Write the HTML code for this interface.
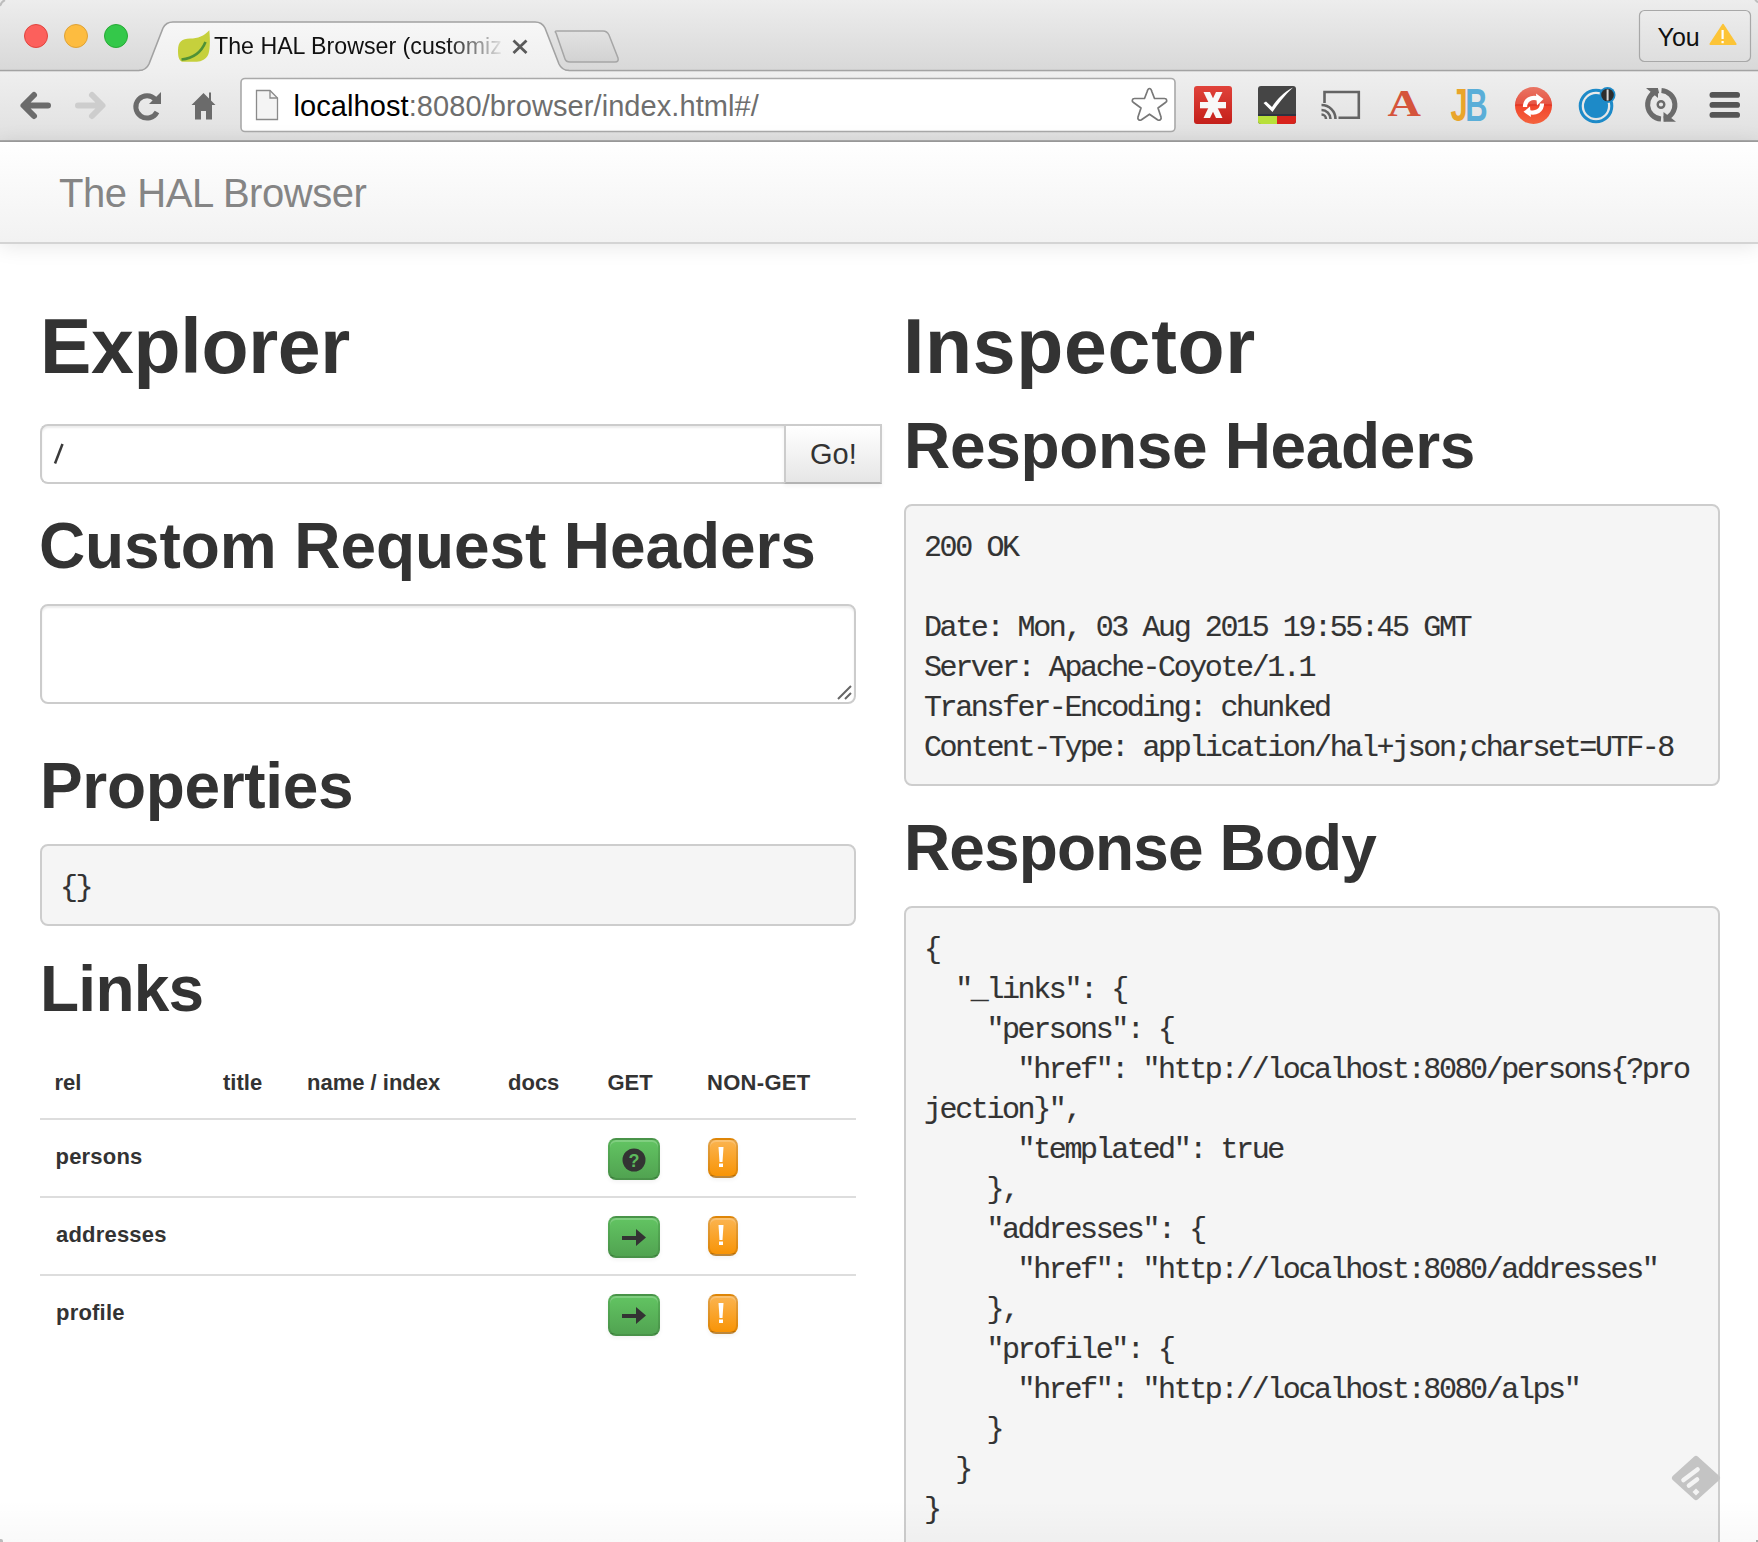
<!DOCTYPE html>
<html><head><meta charset="utf-8">
<style>
*{box-sizing:border-box;margin:0;padding:0}
html,body{width:1758px;height:1542px;overflow:hidden;background:#fff;font-family:"Liberation Sans",sans-serif;color:#333}
.abs{position:absolute}
#tabstrip{position:absolute;left:0;top:0;width:1758px;height:71px;background:linear-gradient(#ececec,#d9d9d9);border-bottom:2px solid #a3a3a3}
#toolbar{position:absolute;left:0;top:71px;width:1758px;height:71px;background:linear-gradient(#f1f1f1,#e4e4e4);border-bottom:2px solid #9d9d9d}
.light{position:absolute;width:24px;height:24px;border-radius:50%;top:24px}
#navbar{position:absolute;left:0;top:142px;width:1758px;height:102px;background:linear-gradient(#fff,#f2f2f2);border-bottom:2px solid #d4d4d4;box-shadow:0 2px 20px rgba(0,0,0,.1)}
.brand{position:absolute;left:59px;top:167.5px;font-size:40px;color:#858585;letter-spacing:-0.45px;white-space:nowrap;line-height:50px}
h1,h2{position:absolute;font-weight:bold;color:#333;white-space:nowrap}
h1{font-size:77px;line-height:80px}
h2{font-size:64px;line-height:80px}
pre{position:absolute;background:#f5f5f5;border:2px solid #cdcdcd;border-radius:8px;font-family:"Liberation Mono",monospace;font-size:30px;letter-spacing:-2.4px;line-height:40px;color:#333;padding:21px 18px;white-space:pre;-webkit-text-stroke:0.15px #333;padding-top:22px}
.th{font-size:22px;font-weight:bold;line-height:40px;color:#333;white-space:nowrap}
.hr{left:40px;width:816px;height:2px;background:#ddd}
.gbtn{left:608px;width:52px;height:42px;border-radius:8px;background:linear-gradient(#62c462,#51a351);border:2px solid #479447;border-color:rgba(0,0,0,.1) rgba(0,0,0,.1) rgba(0,0,0,.25);box-shadow:inset 0 2px 0 rgba(255,255,255,.2),0 2px 4px rgba(0,0,0,.05)}
.obtn{left:708px;width:30px;height:40px;border-radius:8px;background:linear-gradient(#fbb450,#f89406);border:2px solid rgba(0,0,0,.1);border-bottom-color:rgba(0,0,0,.25);box-shadow:inset 0 2px 0 rgba(255,255,255,.2),0 2px 4px rgba(0,0,0,.05)}
.ex{position:absolute;left:-2px;top:-2px}
</style></head><body>

<svg class="abs" style="left:0;top:0" width="1758" height="142" viewBox="0 0 1758 142">
 <defs>
  <linearGradient id="gts" x1="0" y1="0" x2="0" y2="1"><stop offset="0" stop-color="#ededed"/><stop offset="1" stop-color="#d8d8d8"/></linearGradient>
  <linearGradient id="gtab" x1="0" y1="0" x2="0" y2="1"><stop offset="0" stop-color="#f7f7f7"/><stop offset="1" stop-color="#efefef"/></linearGradient>
  <linearGradient id="gtb" x1="0" y1="0" x2="0" y2="1"><stop offset="0" stop-color="#efefef"/><stop offset="1" stop-color="#e0e0e0"/></linearGradient>
  <linearGradient id="gyou" x1="0" y1="0" x2="0" y2="1"><stop offset="0" stop-color="#ececec"/><stop offset="1" stop-color="#dedede"/></linearGradient>
  <linearGradient id="gnt" x1="0" y1="0" x2="0" y2="1"><stop offset="0" stop-color="#e2e2e2"/><stop offset="1" stop-color="#d2d2d2"/></linearGradient>
  <linearGradient id="mfade" x1="0" y1="0" x2="1" y2="0"><stop offset="0" stop-color="#fff"/><stop offset="1" stop-color="#000"/></linearGradient>
  <linearGradient id="glp" x1="0" y1="0" x2="0" y2="1"><stop offset="0" stop-color="#e0423a"/><stop offset="1" stop-color="#c41f1a"/></linearGradient>
  <linearGradient id="gred" x1="0" y1="0" x2="0" y2="1"><stop offset="0" stop-color="#e6624f"/><stop offset="0.5" stop-color="#e33a27"/><stop offset="0.52" stop-color="#f2462c"/><stop offset="1" stop-color="#f4633e"/></linearGradient>
 </defs>
 <rect x="0" y="0" width="1758" height="71" fill="url(#gts)"/>
 <rect x="0" y="71" width="1758" height="70" fill="url(#gtb)"/>
 <rect x="0" y="69.8" width="1758" height="1.5" fill="#a3a3a3"/>
 <rect x="0" y="140.3" width="1758" height="1.6" fill="#959595"/>
 <!-- new tab -->
 <path d="M556 33 Q554 31 557 31 L603 31 Q607 31 609 35 L618 58 Q619 62 615 62 L570 62 Q566 62 565 59 Z" fill="url(#gnt)" stroke="#a6a6a6" stroke-width="1.5"/>
 <!-- active tab -->
 <path d="M139 72 L139 71 Q146 71 149 64 L163 28 Q166 22 173 22 L535 22 Q542 22 545 28 L559 64 Q562 71 569 71 L569 72 Z" fill="url(#gtab)"/>
 <path d="M139 70.5 Q146 70.5 149 64 L163 28 Q166 22 173 22 L535 22 Q542 22 545 28 L559 64 Q562 70.5 569 70.5" fill="none" stroke="#a2a2a2" stroke-width="1.6"/>
 <rect x="147" y="70" width="414" height="3" fill="#efefef"/>
 <!-- favicon leaf -->
 <path d="M182 61.8 C178.5 60 178 56 178 50 C178 42 182 38.5 190 38.5 C198 38.5 204 36 209.3 30.2 C210.3 40 210.3 52 207.5 56 C204.5 60.5 200 61.8 195 61.8 Z" fill="#c6d03c"/>
 <path d="M181.5 59.5 C192 58.5 201 53 205.5 42" fill="none" stroke="#4f9136" stroke-width="2.6"/>
 <mask id="tmask" maskUnits="userSpaceOnUse" x="0" y="0" width="1758" height="71"><rect x="0" y="0" width="446" height="71" fill="#fff"/><rect x="446" y="0" width="60" height="71" fill="url(#mfade)"/></mask>
 <text x="214" y="54" font-family="Liberation Sans" font-size="23.2" fill="#111" mask="url(#tmask)">The HAL Browser (customiz</text>
 <path d="M513.5 40.5 L526.5 53 M526.5 40.5 L513.5 53" stroke="#5a5a5a" stroke-width="2.8"/>
 <!-- You button -->
 <rect x="1639.5" y="10.5" width="111" height="51" rx="5" fill="url(#gyou)" stroke="#a8a8a8" stroke-width="1.2"/>
 <text x="1657.5" y="46" font-family="Liberation Sans" font-size="25" fill="#111">You</text>
 <path d="M1723 25 L1735.5 44 L1710.5 44 Z" fill="#fcc437" stroke="#fcc437" stroke-width="2.2" stroke-linejoin="round"/>
 <rect x="1721.5" y="30" width="2.2" height="9" fill="#fff"/><rect x="1721.5" y="41" width="2.2" height="2.2" fill="#fff"/>
 <!-- back -->
 <path d="M48 105.5 L25 105.5 M34 95 L23.5 105.5 L34 116" fill="none" stroke="#6b6b6b" stroke-width="6" stroke-linecap="round" stroke-linejoin="round"/>
 <!-- forward -->
 <path d="M78 105.5 L101 105.5 M92 95 L102.5 105.5 L92 116" fill="none" stroke="#cdcdcd" stroke-width="6" stroke-linecap="round" stroke-linejoin="round"/>
 <!-- reload -->
 <path d="M155.5 99.5 A11.2 11.2 0 1 0 157 112" fill="none" stroke="#6b6b6b" stroke-width="5"/>
 <path d="M161 92 L161 104 L149 104 Z" fill="#6b6b6b"/>
 <!-- home -->
 <path d="M203.5 93 L191.5 105 L195 105 L195 119.5 L201 119.5 L201 111 L206 111 L206 119.5 L212 119.5 L212 105 L215.5 105 L211 100.5 L211 92.5 L209 92.5 L209 98.5 Z" fill="#6b6b6b"/>
 <!-- address bar -->
 <rect x="241" y="78.5" width="934" height="53" rx="4" fill="#fff" stroke="#a9a9a9" stroke-width="1.6"/>
 <path d="M256.5 90.5 L270 90.5 L277.5 98 L277.5 119.5 L256.5 119.5 Z" fill="#f4f4f4" stroke="#8a8a8a" stroke-width="1.3"/>
 <path d="M270 90.5 L270 98 L277.5 98" fill="none" stroke="#8a8a8a" stroke-width="1.3"/>
 <text x="293.5" y="116" font-family="Liberation Sans" font-size="29" letter-spacing="0.08" fill="#000">localhost<tspan fill="#6e6e6e">:8080/browser/index.html#/</tspan></text>
 <path d="M1149.5 88.5 C1151 88.5 1151.5 90 1152 92 L1154.5 98.5 L1164.5 98.5 C1167 98.5 1167.5 101.5 1165.5 102.5 L1158 108 L1161 117 C1161.8 119.5 1159.5 121 1157.5 119.8 L1149.5 114.2 L1141.5 119.8 C1139.5 121 1137.2 119.5 1138 117 L1141 108 L1133.5 102.5 C1131.5 101.5 1132 98.5 1134.5 98.5 L1144.5 98.5 L1147 92 C1147.5 90 1148 88.5 1149.5 88.5 Z" fill="none" stroke="#787878" stroke-width="1.7" stroke-linejoin="round"/>
 <!-- lastpass -->
 <rect x="1194" y="86" width="38" height="38" rx="3" fill="url(#glp)"/>
 <clipPath id="lpc"><rect x="1190" y="92" width="40" height="26"/></clipPath>
 <g fill="#f8f8f8" clip-path="url(#lpc)">
  <rect x="1200" y="102" width="26" height="6.3"/>
  <path d="M1203.5 92 L1210 92 L1222.5 118 L1216 118 Z"/>
  <path d="M1222.5 92 L1216 92 L1203.5 118 L1210 118 Z"/>
 </g>
 <!-- check -->
 <rect x="1258" y="86" width="38" height="38" rx="3" fill="#454545"/>
 <rect x="1258" y="114" width="38" height="2" fill="#2e3340"/>
 <path d="M1258 116 L1277 116 L1277 124 L1261 124 Q1258 124 1258 121 Z" fill="#b8e03a"/><path d="M1277 116 L1296 116 L1296 121 Q1296 124 1293 124 L1277 124 Z" fill="#d8231c"/>
 <path d="M1263.5 103 L1266 101.5 L1272 107 C1277 99 1284 92 1293 87.5 C1285 95 1278 104 1272.5 112 Z" fill="#fff"/>
 <!-- cast -->
 <path d="M1324.5 103 L1324.5 92 L1358.8 92 L1358.8 117.8 L1338.5 117.8" fill="none" stroke="#646464" stroke-width="2.6"/>
 <path d="M1321.5 105 A14 14 0 0 1 1335.5 119 M1321.5 110 A9 9 0 0 1 1330.5 119 M1321.5 114.5 A4.5 4.5 0 0 1 1326 119" fill="none" stroke="#646464" stroke-width="2.6"/>
 <!-- A -->
 <text transform="translate(1387.5,116) scale(1.22,1)" x="0" y="0" font-family="Liberation Serif" font-weight="bold" font-size="38" fill="#d5543b">A</text>
 <!-- JB -->
 <text transform="translate(1450.5,120.5) scale(1.0,1.5)" x="0" y="0" font-family="Liberation Sans" font-weight="bold" font-size="31" fill="#e9a52a" letter-spacing="-2.5">J<tspan fill="#5aaed8">B</tspan></text>
 <!-- red sync -->
 <circle cx="1533.5" cy="105.5" r="18.5" fill="url(#gred)"/>
 <path d="M1516 104 A17.5 17.5 0 0 1 1551 104 Z" fill="#fff" opacity="0.12"/>
 <path d="M1525 107 C1525 100 1531 96.5 1538 98.5" fill="none" stroke="#fff" stroke-width="4.2"/>
 <path d="M1536 93.5 L1543.5 99 L1537 105.5 Z" fill="#fff"/>
 <path d="M1542 103.5 C1542 110.5 1536 114 1529 112" fill="none" stroke="#fff" stroke-width="4.2"/>
 <path d="M1531 117 L1523.5 111.8 L1530 106.5 Z" fill="#fff"/>
 <!-- blue -->
 <circle cx="1596" cy="106" r="15.8" fill="none" stroke="#1d8ac8" stroke-width="3"/>
 <circle cx="1596" cy="106" r="12" fill="#1d8ac8"/>
 <circle cx="1607.5" cy="95" r="8" fill="#1d8ac8"/>
 <circle cx="1607.5" cy="95" r="6.3" fill="#2d2d2d"/>
 <rect x="1606.6" y="89.5" width="2" height="11" fill="#d8d8d8"/>
 <!-- grey sync -->
 <path d="M1658.5 90.5 A14.5 14.5 0 0 0 1661 119" fill="none" stroke="#6b6b6b" stroke-width="5"/>
 <path d="M1646 88 L1658 88 L1658 98 Z" fill="#6b6b6b"/>
 <path d="M1661.5 90.5 A14.5 14.5 0 0 1 1664 119" fill="none" stroke="#6b6b6b" stroke-width="5"/>
 <path d="M1663.5 121.8 L1676 121.8 L1663.5 112 Z" fill="#6b6b6b"/>
 <circle cx="1661" cy="104.5" r="3.3" fill="none" stroke="#6b6b6b" stroke-width="2.4"/>
 <!-- hamburger -->
 <g fill="#555"><rect x="1709.5" y="92" width="30.5" height="5.8" rx="2.9"/><rect x="1709.5" y="102" width="30.5" height="5.8" rx="2.9"/><rect x="1709.5" y="112" width="30.5" height="5.8" rx="2.9"/></g>
</svg>
<div class="light" style="left:24px;background:#fc605c;border:1px solid #e0443e"></div>
<div class="light" style="left:64px;background:#fdbc40;border:1px solid #dea236"></div>
<div class="light" style="left:104px;background:#34c84a;border:1px solid #27aa35"></div>

<div id="navbar"></div>
<div class="brand">The HAL Browser</div>

<h1 style="left:40px;top:306px;letter-spacing:-0.3px">Explorer</h1>
<h1 style="left:903px;top:306px;letter-spacing:0.7px">Inspector</h1>
<h2 style="left:904px;top:406px;letter-spacing:-0.33px">Response Headers</h2>
<h2 style="left:39px;top:506px;letter-spacing:-0.1px">Custom Request Headers</h2>
<h2 style="left:40px;top:746px;letter-spacing:-0.33px">Properties</h2>
<h2 style="left:40px;top:949px;letter-spacing:-0.75px">Links</h2>
<h2 style="left:904px;top:808px;letter-spacing:-0.9px">Response Body</h2>


<!-- explorer form -->
<div class="abs" style="left:40px;top:424px;width:746px;height:60px;border:2px solid #ccc;border-right:none;border-radius:8px 0 0 8px;background:#fff;box-shadow:inset 0 2px 2px rgba(0,0,0,.075)"></div>
<svg class="abs" style="left:45px;top:436px" width="30" height="34"><path d="M10 27.5 L17.5 8" stroke="#3a3a3a" stroke-width="2.5" stroke-linecap="butt"/></svg>
<div class="abs" style="left:784px;top:424px;width:98px;height:60px;border:2px solid #ccc;border-bottom-color:#b3b3b3;border-radius:0;background:linear-gradient(#fff,#e6e6e6);box-shadow:inset 0 2px 0 rgba(255,255,255,.2),0 2px 4px rgba(0,0,0,.05)"></div>
<div class="abs" style="left:810px;top:433.5px;font-size:29px;line-height:40px;color:#333">Go!</div>
<!-- textarea -->
<div class="abs" style="left:40px;top:604px;width:816px;height:100px;border:2px solid #ccc;border-radius:8px;background:#fff;box-shadow:inset 0 2px 2px rgba(0,0,0,.075)"></div>
<svg class="abs" style="left:835px;top:683px" width="20" height="20"><path d="M3 16 L16 3 M10 16 L16 10" stroke="#666" stroke-width="2"/></svg>

<!-- links table -->
<div class="abs th" style="left:56px;top:1063px;margin-left:-1.5px">rel</div>
<div class="abs th" style="left:224px;top:1063px;margin-left:-1px">title</div>
<div class="abs th" style="left:308px;top:1063px;margin-left:-1px">name / index</div>
<div class="abs th" style="left:508px;top:1063px">docs</div>
<div class="abs th" style="left:608px;top:1063px;margin-left:-0.5px">GET</div>
<div class="abs th" style="left:708px;top:1063px;margin-left:-1px;letter-spacing:0.3px">NON-GET</div>
<div class="abs hr" style="top:1118px"></div>
<div class="abs th" style="left:56px;top:1136.5px;margin-left:-0.5px;letter-spacing:0.2px">persons</div>
<div class="abs hr" style="top:1196px"></div>
<div class="abs th" style="left:56px;top:1214.5px;margin-left:0px;letter-spacing:0.2px">addresses</div>
<div class="abs hr" style="top:1274px"></div>
<div class="abs th" style="left:56px;top:1292.5px;margin-left:0px;letter-spacing:0.2px">profile</div>
<div class="abs gbtn" style="top:1138px"><svg width="52" height="42" style="position:absolute;left:-2px;top:-2px"><circle cx="26" cy="22" r="11.5" fill="#333"/><text x="26" y="29" text-anchor="middle" font-family="Liberation Sans" font-weight="bold" font-size="18" fill="#5cb85c">?</text></svg></div>
<div class="abs gbtn" style="top:1216px"><svg width="52" height="42" style="position:absolute;left:-2px;top:-2px"><path d="M14 20 L28 20 L28 13 L38 21.5 L28 30 L28 24 L14 24 Z" fill="#333"/></svg></div>
<div class="abs gbtn" style="top:1294px"><svg width="52" height="42" style="position:absolute;left:-2px;top:-2px"><path d="M14 20 L28 20 L28 13 L38 21.5 L28 30 L28 24 L14 24 Z" fill="#333"/></svg></div>
<div class="abs obtn" style="top:1138px"><svg class="ex" width="30" height="40"><path d="M10.5 9 L15.5 9 L14.5 24 L11.5 24 Z M11 25.5 L15 25.5 L15 29 L11 29 Z" fill="#fff"/></svg></div>
<div class="abs obtn" style="top:1216px"><svg class="ex" width="30" height="40"><path d="M10.5 9 L15.5 9 L14.5 24 L11.5 24 Z M11 25.5 L15 25.5 L15 29 L11 29 Z" fill="#fff"/></svg></div>
<div class="abs obtn" style="top:1294px"><svg class="ex" width="30" height="40"><path d="M10.5 9 L15.5 9 L14.5 24 L11.5 24 Z M11 25.5 L15 25.5 L15 29 L11 29 Z" fill="#fff"/></svg></div>
<pre style="left:40px;top:844px;width:816px;height:82px">{}</pre>
<pre style="left:904px;top:504px;width:816px;height:282px">200 OK

Date: Mon, 03 Aug 2015 19:55:45 GMT
Server: Apache-Coyote/1.1
Transfer-Encoding: chunked
Content-Type: application/hal+json;charset=UTF-8</pre>
<pre style="left:904px;top:906px;width:816px;height:700px">{
  "_links": {
    "persons": {
      "href": "http://localhost:8080/persons{?pro
jection}",
      "templated": true
    },
    "addresses": {
      "href": "http://localhost:8080/addresses"
    },
    "profile": {
      "href": "http://localhost:8080/alps"
    }
  }
}</pre>

<!-- feedly -->
<svg class="abs" style="left:1666px;top:1450px" width="60" height="60" viewBox="1666 1450 60 60"><path d="M1696 1459 L1717 1478 L1696 1497 L1675 1478 Z" fill="#c4c4c4" stroke="#c4c4c4" stroke-width="6" stroke-linejoin="round"/><path d="M1683.5 1480 L1697.5 1469.5 M1689 1485.5 L1697 1479.5" stroke="#f4f4f4" stroke-width="4.6" stroke-linecap="round"/><path d="M1696 1488.5 L1699.5 1492 L1696 1495.5 L1692.5 1492 Z" fill="#f4f4f4"/></svg>
<div class="abs" style="left:0;top:1500px;width:1758px;height:42px;background:linear-gradient(rgba(0,0,0,0),rgba(0,0,0,.025))"></div>
<svg class="abs" style="left:0;top:0" width="12" height="12"><path d="M0 6 Q1.5 1.5 5 0" fill="none" stroke="#bdbdbd" stroke-width="2"/></svg>
<svg class="abs" style="left:1746px;top:0" width="12" height="12"><path d="M9 0 Q10.5 1 12 2.5" fill="none" stroke="#bdbdbd" stroke-width="2"/></svg>
<div class="abs" style="left:1756px;top:1540px;width:2px;height:2px;background:#aaa"></div>
<div class="abs" style="left:0;top:1539px;width:3px;height:3px;background:#bbb;border-radius:0 2px 0 0"></div>
</body></html>
